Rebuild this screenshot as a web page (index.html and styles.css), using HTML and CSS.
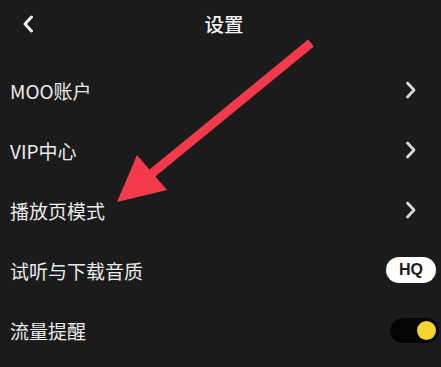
FILE: index.html
```html
<!DOCTYPE html>
<html lang="zh-CN">
<head>
    <meta charset="UTF-8">
    <meta name="viewport" content="width=device-width, initial-scale=1.0">
    <title>设置</title>
    <link rel="stylesheet" href="styles.css">
</head>
<body>
    <div class="screen">
        <div class="header">
            <svg class="back" width="12" height="18" viewBox="0 0 12 18">
                <path d="M9.5 2 L3 9 L9.5 16" fill="none" stroke="#f2f2f2" stroke-width="3" stroke-linecap="round" stroke-linejoin="round"/>
            </svg>
            <h1>设置</h1>
        </div>

        <ul class="settings">
            <li class="row">
                <span>MOO账户</span>
                <svg class="chevron" width="12" height="18" viewBox="0 0 12 18"><path d="M2.5 2 L9 9 L2.5 16" /></svg>
            </li>
            <li class="row">
                <span>VIP中心</span>
                <svg class="chevron" width="12" height="18" viewBox="0 0 12 18"><path d="M2.5 2 L9 9 L2.5 16" /></svg>
            </li>
            <li class="row">
                <span>播放页模式</span>
                <svg class="chevron" width="12" height="18" viewBox="0 0 12 18"><path d="M2.5 2 L9 9 L2.5 16" /></svg>
            </li>
            <li class="row">
                <span>试听与下载音质</span>
                <span class="hq">HQ</span>
            </li>
            <li class="row">
                <span>流量提醒</span>
                <span class="toggle"><span class="knob"></span></span>
            </li>
        </ul>

        <!-- annotation arrow -->
        <svg class="arrow" width="441" height="367" viewBox="0 0 441 367">
            <line x1="311" y1="43" x2="150" y2="175" stroke="#f23a4c" stroke-width="9" />
            <polygon points="117,202 137,155 167,190" fill="#f23a4c" />
        </svg>
    </div>
</body>
</html>
```

FILE: styles.css
```css
body {
    margin: 0;
    background-color: #1b1b1b;
    font-family: "Noto Sans CJK SC", "Noto Sans", sans-serif;
    color: #ececec;
}

.screen {
    position: relative;
    width: 441px;
    height: 367px;
    overflow: hidden;
}

.header {
    position: relative;
    height: 46px;
    display: flex;
    align-items: center;
    justify-content: center;
}

.header h1 {
    margin: 0;
    font-size: 19.5px;
    font-weight: 500;
    color: #f2f2f2;
    padding-left: 7px;
}

.back {
    position: absolute;
    left: 22px;
    top: 15px;
}

.settings {
    list-style: none;
    margin: 0;
    padding: 14px 0 0 0;
}

.row {
    height: 60px;
    display: flex;
    align-items: center;
    justify-content: space-between;
    padding: 0 4px 0 10px;
    font-size: 19px;
}

.chevron {
    margin-right: 20px;
}

.chevron path {
    fill: none;
    stroke: #d8d8d8;
    stroke-width: 2.8;
    stroke-linecap: round;
    stroke-linejoin: round;
}

.hq {
    width: 50px;
    height: 26px;
    border-radius: 13px;
    background: #ffffff;
    color: #1b1b1b;
    font-family: "Liberation Sans", Arial, sans-serif;
    font-weight: bold;
    font-size: 16px;
    display: flex;
    align-items: center;
    justify-content: center;
    margin-right: 1px;
}

.toggle {
    width: 49px;
    height: 25px;
    border-radius: 13px;
    background: #050505;
    display: flex;
    align-items: center;
    justify-content: flex-end;
    padding-right: 3px;
    box-sizing: border-box;
    margin-right: -2px;
}

.knob {
    width: 19px;
    height: 19px;
    border-radius: 50%;
    background: #f7d332;
}

.arrow {
    position: absolute;
    left: 0;
    top: 0;
    pointer-events: none;
}
```
